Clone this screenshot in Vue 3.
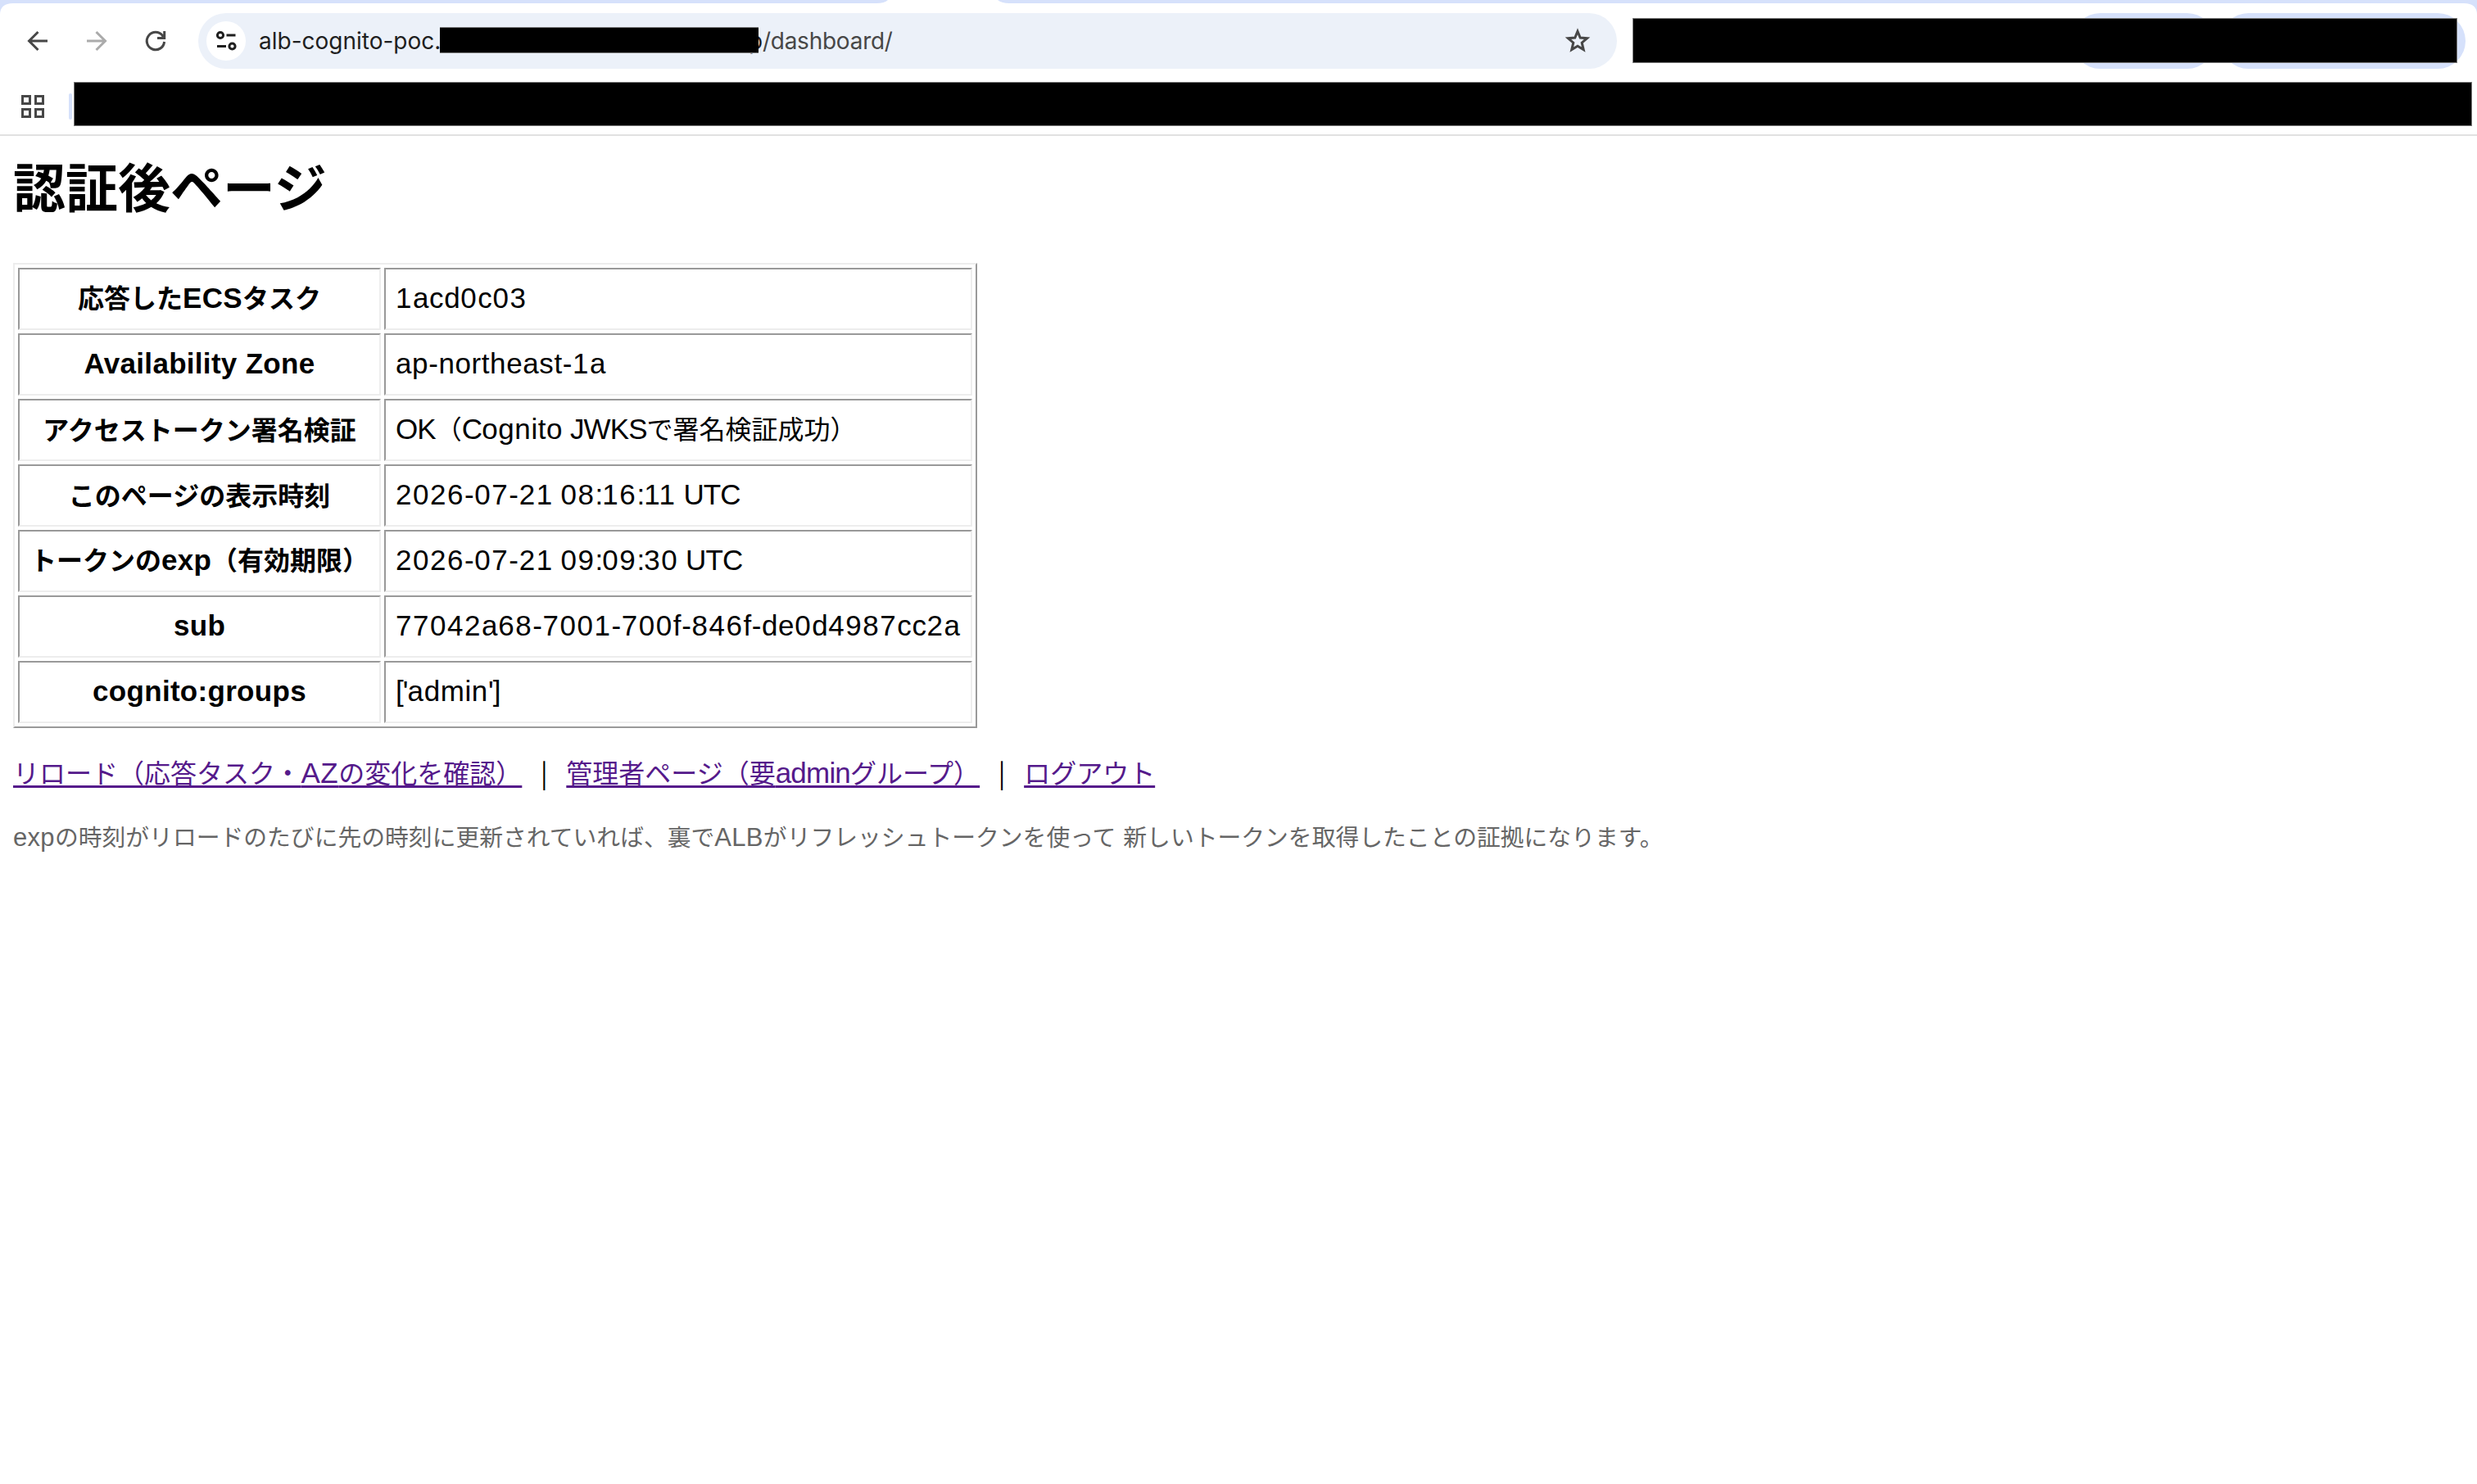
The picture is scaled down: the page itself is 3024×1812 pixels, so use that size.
<template>
  <div class="browser">
    <!-- Tab strip -->
    <svg class="tab-strip" width="3024" height="20" viewBox="0 0 3024 20">
      <path d="M0 0H1084Q1080 4 1070 4H16Q0 4 0 18Z" />
      <path d="M1218 0H3024V18Q3024 4 3008 4H1232Q1223 4 1218 0Z" />
    </svg>

    <!-- Toolbar -->
    <header class="toolbar">
      <nav class="nav-buttons">
        <svg width="24" height="24" viewBox="0 0 24 24" class="icon">
          <path d="M24 12H2M12.5 1L1.5 12L12.5 23" />
        </svg>
        <svg width="24" height="24" viewBox="0 0 24 24" class="icon disabled">
          <path d="M0 12H22M11.5 1L22.5 12L11.5 23" />
        </svg>
        <svg width="24" height="24" viewBox="0 0 24 24" class="icon">
          <path d="M22.6 13A10.7 10.7 0 1 1 20.5 5.6L22 8M22.7 0V8.6H14" />
        </svg>
      </nav>

      <div class="address-bar">
        <div class="site-info">
          <svg width="24" height="24" viewBox="0 0 24 24" class="icon tune">
            <circle cx="5" cy="5" r="3.6" />
            <circle cx="19.5" cy="18.5" r="3.6" />
            <path d="M12.5 5H23.5M1 18.5H12" />
          </svg>
        </div>
        <span class="host">alb-cognito-poc.</span>
        <span class="redacted url-mask"></span>
        <span class="tail"><b class="last-letter">p</b>/dashboard/</span>
        <svg class="star" width="32" height="32" viewBox="0 0 32 32">
          <path d="M16 4.2L19.2 12L27.6 12.7L21.2 18.2L23.2 26.6L16 22.2L8.8 26.6L10.8 18.2L4.4 12.7L12.8 12Z" />
        </svg>
      </div>

      <div class="actions">
        <span class="pill pill-small"></span>
        <span class="pill pill-large"></span>
        <span class="redacted actions-mask"></span>
      </div>
    </header>

    <!-- Bookmarks -->
    <div class="bookmarks">
      <svg width="28" height="28" viewBox="0 0 28 28" class="icon apps">
        <path d="M1.5 1.5H10.5V10.5H1.5ZM17.5 1.5H26.5V10.5H17.5ZM1.5 17.5H10.5V26.5H1.5ZM17.5 17.5H26.5V26.5H17.5Z" />
      </svg>
      <span class="separator"></span>
      <span class="redacted bookmarks-mask"></span>
    </div>

    <main class="page">
      <h1>認証後ページ</h1>

      <table>
        <tbody>
          <tr v-for="row in rows" :key="row.label">
            <th>
              <span v-for="(part, i) in split(row.label)" :key="i" :class="part.type">{{ part.text }}</span>
            </th>
            <td>
              <span v-for="(part, i) in split(row.value)" :key="i" :class="part.type">{{ part.text }}</span>
            </td>
          </tr>
        </tbody>
      </table>

      <p class="links">
        <template v-for="(link, n) in links" :key="link">
          <span v-if="n" class="bar">|</span>
          <a href="#"><span v-for="(part, i) in split(link)" :key="i" :class="part.type">{{ part.text }}</span></a>
        </template>
      </p>

      <p class="note">
        <span v-for="(part, i) in split(note)" :key="i" :class="part.type">{{ part.text }}</span>
      </p>
    </main>
  </div>
</template>

<script setup>
const rows = [
  { label: '応答したECSタスク', value: '1acd0c03' },
  { label: 'Availability Zone', value: 'ap-northeast-1a' },
  { label: 'アクセストークン署名検証', value: 'OK（Cognito JWKSで署名検証成功）' },
  { label: 'このページの表示時刻', value: '2026-07-21 08:16:11 UTC' },
  { label: 'トークンのexp（有効期限）', value: '2026-07-21 09:09:30 UTC' },
  { label: 'sub', value: '77042a68-7001-700f-846f-de0d4987cc2a' },
  { label: 'cognito:groups', value: "['admin']" }
]

const links = [
  'リロード（応答タスク・AZの変化を確認）',
  '管理者ページ（要adminグループ）',
  'ログアウト'
]

const note =
  'expの時刻がリロードのたびに先の時刻に更新されていれば、裏でALBがリフレッシュトークンを使って 新しいトークンを取得したことの証拠になります。'

// latin runs get their own font, digits and lowercase are tracked separately
const split = (text) =>
  text.match(/[0-9]+|[a-z-]+|[^0-9a-z\-\u0080-\uffff]+|[\u0080-\uffff]+/g).map((t) => ({
    text: t,
    type: {
      latin: /^[\x20-\x7e]/.test(t),
      digits: /^[0-9]/.test(t),
      lower: /^[a-z-]/.test(t)
    }
  }))
</script>

<style>
body {
  background: #ffffff;
}
</style>

<style scoped>
.browser {
  width: 3024px;
  height: 1812px;
  overflow: hidden;
  position: relative;
  background: #ffffff;
  color: #000000;
  font-family: "Noto Sans CJK JP", sans-serif;
}

/* =========================
   TOOLBAR
========================= */
.tab-strip {
  position: absolute;
  top: 0;
  left: 0;
  fill: #d6e1fb;
}

.toolbar {
  display: flex;
  align-items: center;
  height: 68px;
  padding: 16px 0 0 34px;
}

.nav-buttons {
  display: flex;
  gap: 48px;
  width: 208px;
}

.icon {
  display: block;
  fill: none;
  stroke: #474747;
  stroke-width: 3;
  overflow: visible;
  flex-shrink: 0;
}

.disabled {
  stroke: #ababab;
}

.tune {
  stroke: #1f1f1f;
}

.address-bar {
  display: flex;
  align-items: center;
  box-sizing: border-box;
  width: 1732px;
  height: 68px;
  padding: 0 32px 0 10px;
  border-radius: 34px;
  background: #ecf1f9;
  font-family: Inter, sans-serif;
  font-size: 28px;
}

.site-info {
  display: flex;
  align-items: center;
  justify-content: center;
  width: 48px;
  height: 48px;
  margin-right: 16px;
  border-radius: 50%;
  background: #ffffff;
}

.host {
  width: 221px;
  white-space: nowrap;
  color: #1f1f1f;
}

.redacted {
  box-sizing: border-box;
  background: #000000;
  border: 1px solid #7b7b7b;
  flex-shrink: 0;
}

.url-mask {
  width: 389px;
  height: 32px;
  margin-top: -2px;
  border-width: 1px 0;
  z-index: 1;
}

.tail {
  margin-left: -12px;
  color: #474747;
  letter-spacing: -0.25px;
  white-space: nowrap;
}

.last-letter {
  font-weight: 400;
  color: #1f1f1f;
}

.star {
  margin-left: auto;
  fill: none;
  stroke: #474747;
  stroke-width: 3;
}

.actions {
  position: relative;
  display: flex;
  gap: 7px;
  margin-left: 556px;
}

.pill {
  height: 68px;
  border-radius: 34px;
  background: #d6e1fb;
}

.pill-small {
  width: 174px;
}

.pill-large {
  width: 299px;
}

.actions-mask {
  position: absolute;
  top: 6px;
  right: 10px;
  width: 1007px;
  height: 55px;
}

/* =========================
   BOOKMARKS
========================= */
.bookmarks {
  display: flex;
  align-items: center;
  height: 54px;
  padding: 16px 0 10px 26px;
  border-bottom: 2px solid #e1e1e1;
}

.separator {
  width: 4px;
  height: 32px;
  margin: 6px 2px 0 30px;
  border-radius: 2px;
  background: #d6e1fb;
}

.apps {
  margin-top: 6px;
}

.bookmarks-mask {
  width: 2928px;
  height: 54px;
}

/* =========================
   PAGE
========================= */
.page {
  padding: 0 16px;
  font-size: 32px;
}

.latin {
  font-family: "Liberation Sans", sans-serif;
  font-size: 35px;
  white-space: pre;
}

h1 {
  margin: 0;
  height: 155px;
  font-size: 64px;
  line-height: 119px;
}

table {
  width: 1177px;
  table-layout: fixed;
  border: 2px solid;
  border-color: #ededed #999999 #999999 #ededed;
  border-spacing: 4px;
  border-collapse: separate;
}

th,
td {
  box-sizing: border-box;
  height: 76px;
  padding: 0 12px 5px;
  border: 2px solid;
  border-color: #999999 #ededed #ededed #999999;
  line-height: 40px;
  text-align: left;
  white-space: nowrap;
}

th {
  width: 443px;
  text-align: center;
}

th .latin {
  letter-spacing: 0.3px;
}

td .latin {
  letter-spacing: -0.9px;
}

td .lower {
  letter-spacing: 0.6px;
}

td .digits {
  letter-spacing: 1.55px;
}

.links {
  display: flex;
  margin: 31px 0 0;
  line-height: 44px;
}

.links a {
  color: #551a8b;
  text-decoration: underline;
  text-decoration-thickness: 3px;
  text-underline-offset: 3px;
  text-decoration-skip-ink: none;
}

.links .latin {
  letter-spacing: 0.6px;
}

.links .lower {
  letter-spacing: -0.8px;
}

.bar {
  width: 54px;
  text-align: center;
}

.note {
  margin: 35px 0 0;
  font-size: 28.8px;
  line-height: 40px;
  color: #666666;
}

.note .latin {
  font-size: 31px;
  letter-spacing: 0.3px;
}
</style>
